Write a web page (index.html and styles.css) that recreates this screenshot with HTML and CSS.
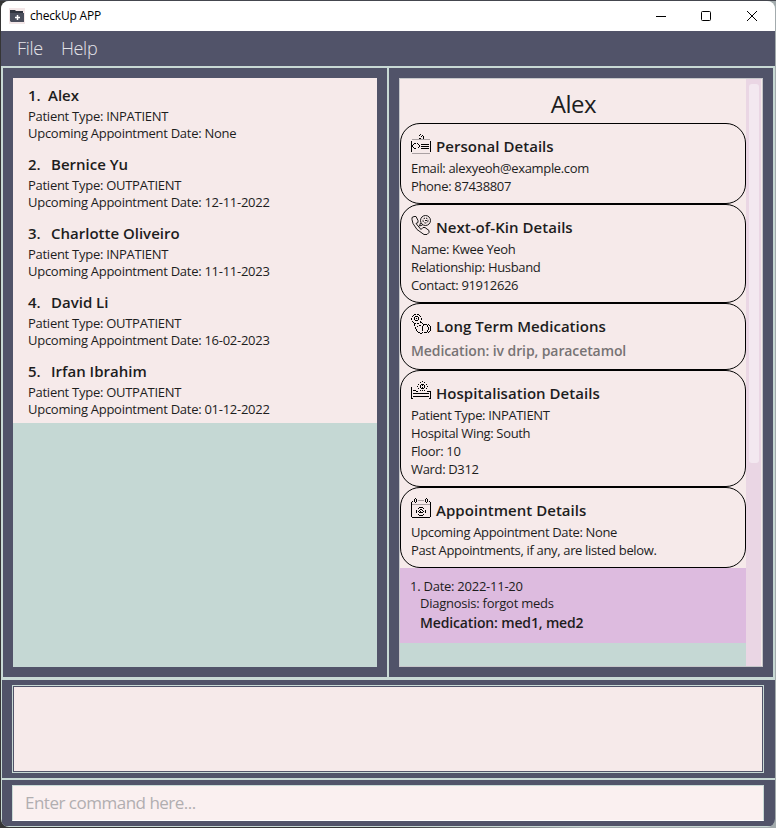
FILE: index.html
```html
<!DOCTYPE html>
<html lang="en">
<head>
<meta charset="utf-8">
<title>checkUp APP</title>
<link rel="stylesheet" href="styles.css">
</head>
<body>
<div class="window">
  <header class="titlebar">
    <svg class="app-icon" width="16" height="16" viewBox="0 0 16 16"><rect width="16" height="16" fill="#f3e7e8"/><path d="M1 2h5l1 1h7v3H1z" fill="#30343f"/><path d="M1 5h14v9H2l-1-1z" fill="#4a4e5c"/><path d="M8.500 7v5M6 9.500h5" stroke="#fff" stroke-width="1.500"/></svg>
    <span class="app-name">checkUp APP</span>
    <svg class="controls" width="104" height="12" viewBox="0 0 104 12" fill="none" stroke="#000"><path d="M0 6.500h10"/><rect x="45.500" y="1.500" width="9" height="9" rx="1"/><path d="M91 1l10 10M101 1L91 11"/></svg>
  </header>
  <nav class="menu"><span>File</span><span>Help</span></nav>
  <main class="panes">
    <section class="pane">
      <div class="list">
        <article class="patient"><h2><span class="num first">1.</span>Alex</h2><p>Patient Type: INPATIENT</p><p>Upcoming Appointment Date: None</p></article>
        <article class="patient"><h2><span class="num">2.</span>Bernice Yu</h2><p>Patient Type: OUTPATIENT</p><p>Upcoming Appointment Date: 12-11-2022</p></article>
        <article class="patient"><h2><span class="num">3.</span>Charlotte Oliveiro</h2><p>Patient Type: INPATIENT</p><p>Upcoming Appointment Date: 11-11-2023</p></article>
        <article class="patient"><h2><span class="num">4.</span>David Li</h2><p>Patient Type: OUTPATIENT</p><p>Upcoming Appointment Date: 16-02-2023</p></article>
        <article class="patient"><h2><span class="num">5.</span>Irfan Ibrahim</h2><p>Patient Type: OUTPATIENT</p><p>Upcoming Appointment Date: 01-12-2022</p></article>
      </div>
    </section>
    <section class="pane">
      <div class="details">
        <div class="content">
          <h1>Alex</h1>
          <div class="cards">
            <article class="card">
              <h3><svg class="icon" viewBox="0 0 20 20"><path class="soft" d="M1 5.500h18M1 19.500h18"/><path d="M.5 7v11M19.500 7v11M8 1.500h1M9 .5h1M10 2.500h1M11 1.500h1M12.500 2v3M8 4.500h2M3 9.500h2M2.500 10v1M1.500 11v2M2.500 13v1M3 14.500h2M6 9.500h1M7.500 10v1M8.500 11v2M7.500 13v1M10 10.500h8M10 12.500h8M10 14.500h8"/></svg>Personal Details</h3>
              <p>Email: alexyeoh@example.com</p><p>Phone: 87438807</p>
            </article>
            <article class="card">
              <h3><svg class="icon smooth" viewBox="0 0 20 20"><path d="M1 2.500l2-1h2l2 4v2l-2 1 5 6 2-2h2l4 3v2l-2 2h-3l-7-5-4-6-1-4z"/><circle cx="14.500" cy="5.500" r="5"/><circle cx="14.500" cy="5.500" r="2.500" class="dots"/><path d="M9.500 8l-1 3 3-1M14 5.500h2"/></svg>Next-of-Kin Details</h3>
              <p>Name: Kwee Yeoh</p><p>Relationship: Husband</p><p>Contact: 91912626</p>
            </article>
            <article class="card">
              <h3><svg class="icon" viewBox="0 0 20 20"><path d="M3 .5h2M6 .5h2M2 1.500h1M8 1.500h1M1 2.500h1M9 2.500h1M.5 4v2M10.500 4v2M1 7.500h1M9 7.500h1M2 8.500h1M3 9.500h2M6 9.500h2M4 2.500h3M3.500 3v3M7.500 3v3M4 6.500h3M5 4.500h1"/><path d="M3.500 10v2M4.500 13v2M5.500 15v2M6.500 17v1M7 18.500h2M9 19.500h2M11 18.500h1M9 8.500h2M11 9.500h1M12.500 10v2M11.500 12v5M6 12.500h1M8 11.500h2"/><path d="M13 10.500h3M16.500 11v2M17.500 13v3M16.500 16v2M13 18.500h3M17 10.500h1M18.500 11v1M19.500 12v5M18.500 17v1M17 18.500h1"/></svg>Long Term Medications</h3>
              <p class="medication">Medication: iv drip, paracetamol</p>
            </article>
            <article class="card">
              <h3><svg class="icon" viewBox="0 0 20 20"><path d="M.5 6v12M1 17.500h1M2 12.500h16M2 15.500h16M18 17.500h1M19.500 10v8M2 9.500h3M5 10.500h2M16 10.500h3"/><path d="M10 3.500h3M9.500 4v3M13.500 4v3M10 7.500h3M11 4.500h1M11 6.500h1M11 .5h1M9 1.500h1M13 1.500h1M7.500 3v1M15.500 3v1M6 5.500h1M16 5.500h1M7.500 7v1M15.500 7v1M9 9.500h1M13 9.500h1M11 9.500h1"/></svg>Hospitalisation Details</h3>
              <p>Patient Type: INPATIENT</p><p>Hospital Wing: South</p><p>Floor: 10</p><p>Ward: D312</p>
            </article>
            <article class="card">
              <h3><svg class="icon" viewBox="0 0 20 20"><path class="soft" d="M7 2.500h6M1 6.500h18"/><path d="M.5 4v15M19.500 4v15M1 19.500h18M1 3.500h1M18 3.500h1M4 .5h1M3.500 1v3M5.500 1v3M4 4.500h1M15 .5h1M14.500 1v3M16.500 1v3M15 4.500h1"/><path d="M8 9.500h4M7 10.500h1M12 10.500h1M5.500 12v3M14.500 12v3M7 16.500h1M12 16.500h1M8 17.500h4M9 11.500h2M8 12.500h1M11 12.500h1M7 13.500h1M12 13.500h1M8 14.500h4M9.500 13v1"/></svg>Appointment Details</h3>
              <p>Upcoming Appointment Date: None</p><p>Past Appointments, if any, are listed below.</p>
            </article>
          </div>
          <div class="appointment"><p>1. Date: 2022-11-20</p><p class="sub">Diagnosis: forgot meds</p><p class="sub strong">Medication: med1, med2</p></div>
        </div>
        <div class="scroll"><div class="thumb"></div></div>
      </div>
    </section>
  </main>
  <section class="result"><div class="result-box"></div></section>
  <section class="command"><div class="field">Enter command here...</div></section>
</div>
</body>
</html>
```
FILE: styles.css
```css
* { box-sizing: border-box; }
body, h1, h2, h3, p { margin: 0; }
body { width: 776px; height: 828px; overflow: hidden; background: linear-gradient(90deg, #353535 50%, #a3abad 75%); font: 13px/18px "Open Sans", "Noto Sans", sans-serif; color: #1d1d1d; border-top: 1px solid #44464e; padding: 0 1px; }
.window { height: 826px; background: #c8d9d5; border-radius: 8px; overflow: hidden; display: flex; flex-direction: column; }
.titlebar { height: 30px; background: #fff; display: flex; align-items: center; padding: 0 15px 0 8px; }
.app-name { margin-left: 5px; font-size: 12px; letter-spacing: -.2px; color: #000; }
.controls { margin-left: auto; }
.menu { height: 35px; background: #515369; color: #e4e4e9; font-size: 18px; font-weight: 300; line-height: 34px; letter-spacing: -.3px; padding-left: 16px; display: flex; gap: 18px; }
.panes { height: 609px; margin-top: 2px; padding: 0 2px; display: grid; grid-template-columns: 384px 384px; gap: 2px; }
.pane { background: #515369; padding: 10px; }
.list { height: 589px; background: #c5d8d4; }
.patient { height: 69px; background: #f6eaea; padding: 7px 0 0 15px; line-height: 17px; letter-spacing: -.27px; }
.patient h2 { font-size: 15px; font-weight: 600; line-height: 20px; height: 23px; letter-spacing: 0; display: flex; }
.num { width: 23px; }
.first { width: 20px; }
.details { height: 589px; border: 1px solid #c6c7ca; background: #c5d8d4; display: flex; }
.content { width: 346px; }
h1 { height: 44px; background: #f6eaea; text-align: center; font-size: 24px; font-weight: 400; line-height: 49px; letter-spacing: -.5px; padding-left: 1px; }
.cards { background: #f6eaea; }
.card { border: 1px solid #000; border-radius: 20px; padding: 10px 10px 8px; letter-spacing: -.34px; }
.card h3 { height: 25px; font-size: 15px; font-weight: 600; line-height: 24px; display: flex; gap: 5px; letter-spacing: .04px; }
.icon { width: 20px; height: 20px; fill: none; stroke: #000; stroke-width: 1; shape-rendering: crispEdges; }
.smooth { shape-rendering: auto; stroke-width: .9; }
.soft { stroke: #aaa1a3; }
.dots { stroke-dasharray: 2 1; }
.medication { font-size: 14px; font-weight: 600; line-height: 24px; letter-spacing: -.1px; color: #777374; height: 22px; }
.appointment { height: 75px; background: #ddbbdf; padding: 10px 0 0 10px; line-height: 17px; letter-spacing: -.25px; }
.sub { padding-left: 10px; }
.strong { font-size: 14px; font-weight: 600; line-height: 21px; letter-spacing: -.15px; }
.scroll { width: 16px; background: #ead6e4; padding: 5px 3px; border-right: 1px solid #f6eaea; }
.thumb { width: 10px; height: 379px; border-radius: 3px; background: #f3e8f0; }
.result { height: 98px; margin: 3px 0 0 1px; background: #515369; padding: 5px 11px 5px 10px; }
.result-box { height: 88px; background: #f6eaea; border: 1px solid #c8d9d5; box-shadow: inset 0 0 0 1px #515369; }
.command { height: 46px; margin: 2px 0 0 1px; background: #515369; padding: 5px 11px 5px 10px; }
.field { height: 36px; background: #faf0f0; border: 1px solid #c8d9d5; border-bottom-color: #fff; padding-left: 12px; color: #b1aeb0; font-size: 17px; line-height: 34px; letter-spacing: -.5px; }
```
